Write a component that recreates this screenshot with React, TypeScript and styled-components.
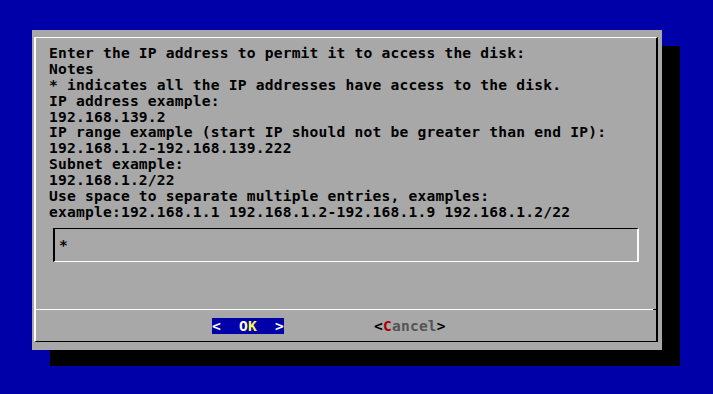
import styled, { createGlobalStyle } from 'styled-components';

const GlobalStyle = createGlobalStyle`
  html, body {
    margin: 0;
    padding: 0;
    background-color: #0000a8;
    overflow: hidden;
  }
  body {
    height: 100vh;
  }
`;

const Screen = styled.div`
  padding: 30px 0 0 32px;
  font-family: 'DejaVu Sans Mono', 'Liberation Mono', monospace;
  font-size: 14.6px;
  font-weight: bold;
  letter-spacing: 0.2px;
  line-height: 15.87px;
`;

const Dialog = styled.div`
  box-sizing: border-box;
  width: 630px;
  height: 320px;
  padding: 7px 4px 8px 2px;
  background-color: #a8a8a8;
  box-shadow: 18px 16px 0 0 #000;
`;

const Frame = styled.div`
  box-sizing: border-box;
  height: 100%;
  display: flex;
  flex-direction: column;
  border-top: 1px solid #fcfcfc;
  border-left: 2px solid #fcfcfc;
  border-right: 2px solid #000;
  border-bottom: 1px solid #000;
`;

const Message = styled.div`
  padding: 7px 0 0 13px;
  color: #000;
  white-space: pre;
`;

const InputBox = styled.div`
  box-sizing: border-box;
  height: 34px;
  margin: 8px 17px 0 17px;
  padding: 8px 0 0 4px;
  border-top: 1px solid #000;
  border-left: 2px solid #000;
  border-right: 2px solid #fcfcfc;
  border-bottom: 1px solid #fcfcfc;
  color: #000;
`;

const Spacer = styled.div`
  flex: 1;
`;

const Separator = styled.div`
  position: relative;
  border-top: 1px solid #fcfcfc;

  &::after {
    content: '';
    position: absolute;
    right: 0;
    top: -1px;
    width: 3px;
    height: 1px;
    background-color: #000;
  }
`;

const ButtonRow = styled.div`
  display: flex;
  gap: 90px;
  padding: 8px 0 7px 176px;
`;

const Button = styled.div<{ $active?: boolean }>`
  height: 16px;
  white-space: pre;
  color: ${(p) => (p.$active ? '#fcfcfc' : '#000')};
  background-color: ${(p) => (p.$active ? '#0000a8' : 'transparent')};
`;

const Hotkey = styled.span<{ $color: string }>`
  color: ${(p) => p.$color};
`;

const Label = styled.span<{ $color: string }>`
  color: ${(p) => p.$color};
`;

const lines = [
  'Enter the IP address to permit it to access the disk:',
  'Notes',
  '* indicates all the IP addresses have access to the disk.',
  'IP address example:',
  '192.168.139.2',
  'IP range example (start IP should not be greater than end IP):',
  '192.168.1.2-192.168.139.222',
  'Subnet example:',
  '192.168.1.2/22',
  'Use space to separate multiple entries, examples:',
  'example:192.168.1.1 192.168.1.2-192.168.1.9 192.168.1.2/22',
];

export default function App() {
  return (
    <>
      <GlobalStyle />
      <Screen>
        <Dialog>
          <Frame>
            <Message>{lines.join('\n')}</Message>
            <InputBox>*</InputBox>
            <Spacer />
            <Separator />
            <ButtonRow>
              <Button $active>
                {'<  O'}
                <Hotkey $color="#fcfc54">K</Hotkey>
                {'  >'}
              </Button>
              <Button>
                {'<'}
                <Hotkey $color="#a80000">C</Hotkey>
                <Label $color="#545454">ancel</Label>
                {'>'}
              </Button>
            </ButtonRow>
          </Frame>
        </Dialog>
      </Screen>
    </>
  );
}
